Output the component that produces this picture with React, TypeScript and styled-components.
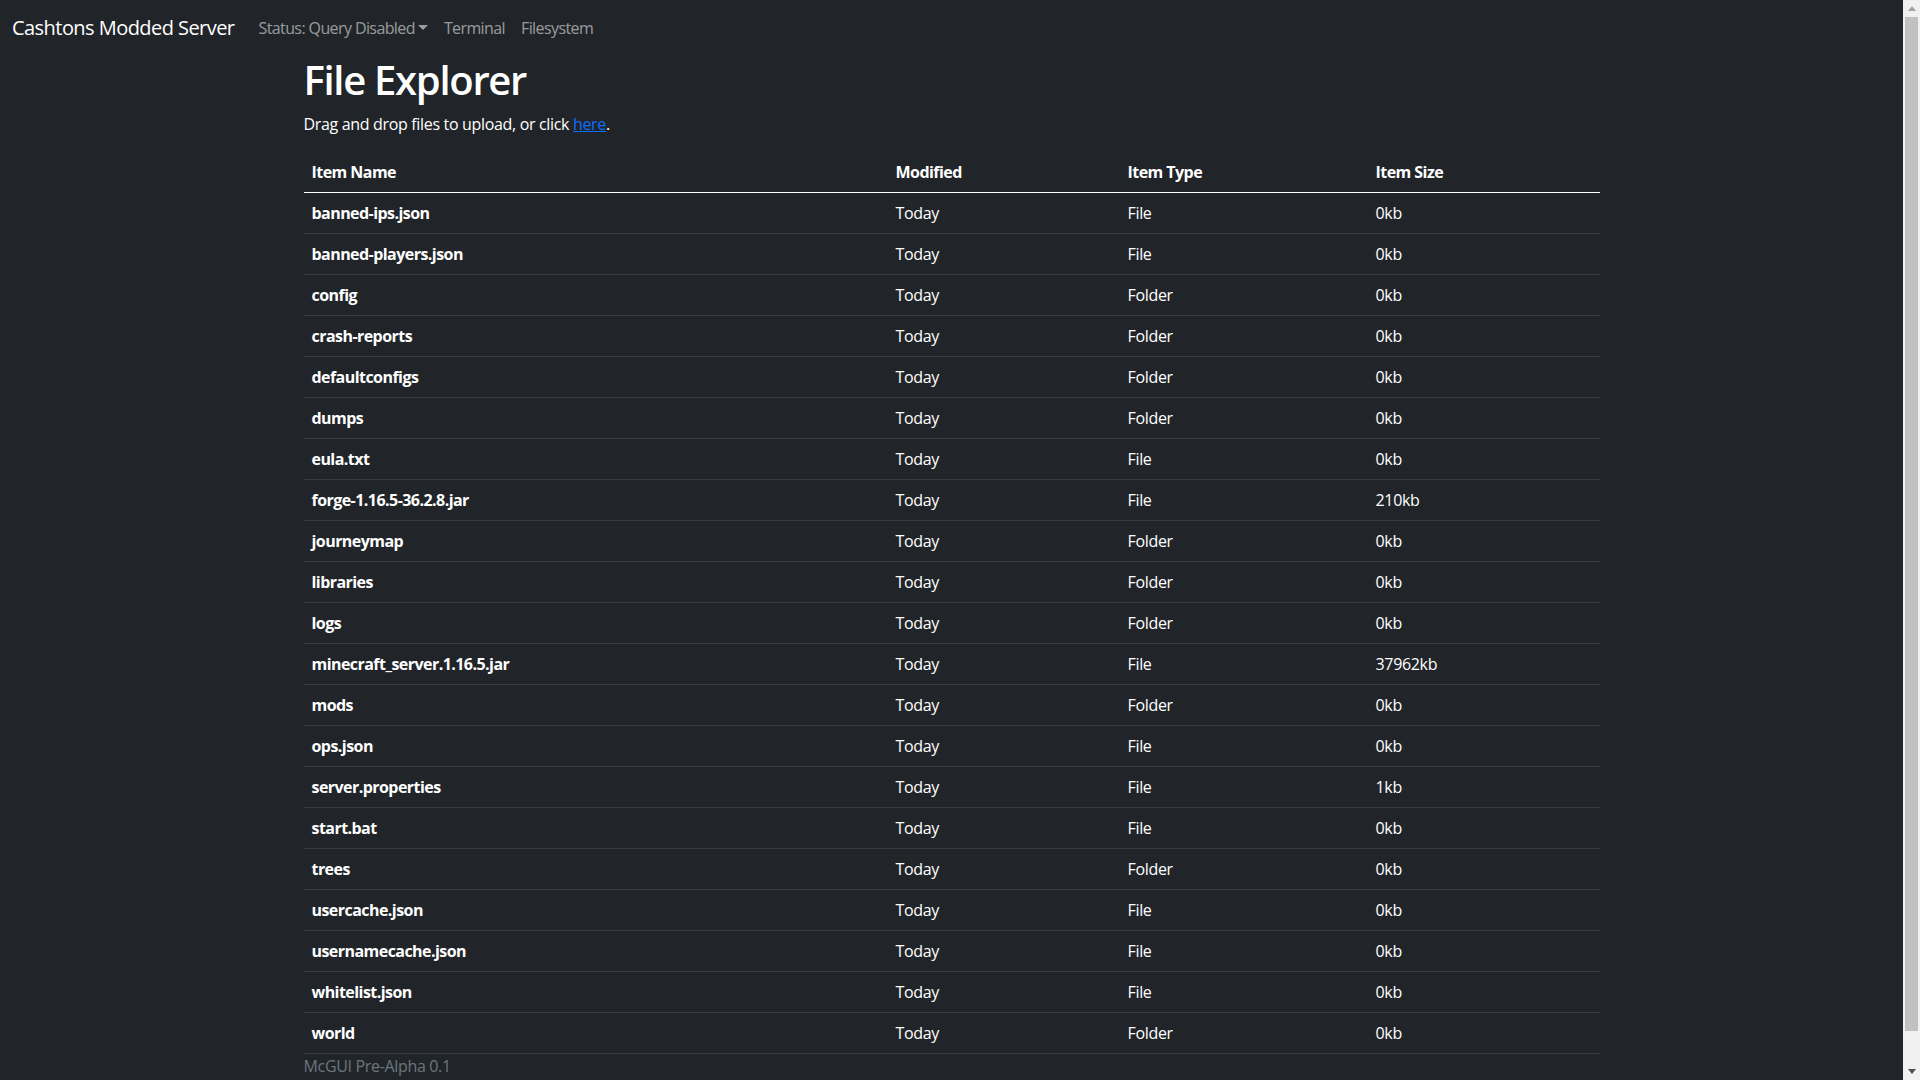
import React from "react";
import styled, { createGlobalStyle } from "styled-components";

const GlobalStyle = createGlobalStyle`
  html, body {
    margin: 0;
    padding: 0;
    background: #212529;
  }
  body {
    font-family: "Open Sans", "Noto Sans", sans-serif;
    font-size: 16px;
    line-height: 1.5;
    color: #fff;
    letter-spacing: -0.33px;
  }
  * { box-sizing: border-box; }
`;

const Page = styled.div`
  margin-right: 17px;
`;

const Scrollbar = styled.div`
  position: fixed;
  top: 0;
  right: 0;
  width: 17px;
  height: 100vh;
  background: #f1f1f1;
  display: flex;
  flex-direction: column;
  align-items: center;
`;

const ScrollButton = styled.div`
  height: 17px;
  width: 17px;
  display: flex;
  align-items: center;
  justify-content: center;
`;

const Thumb = styled.div`
  flex: 1;
  width: 13px;
  margin-bottom: 32px;
  background: #c1c1c1;
`;

const Navbar = styled.nav`
  display: flex;
  align-items: center;
  height: 56px;
  padding: 8px 12px;
  background: #212529;
`;

const Brand = styled.a`
  font-size: 20px;
  line-height: 30px;
  padding: 5px 0;
  margin-right: 16px;
  color: #fff;
  text-decoration: none;
  white-space: nowrap;
  letter-spacing: -0.55px;
`;

const NavList = styled.ul`
  display: flex;
  list-style: none;
  margin: 0;
  padding: 0;
`;

const NavLink = styled.a`
  display: block;
  padding: 8px;
  color: rgba(255, 255, 255, 0.55);
  text-decoration: none;
  font-size: 16px;
  line-height: 24px;
  white-space: nowrap;
  letter-spacing: -0.6px;
`;

const Caret = styled.span`
  display: inline-block;
  margin-left: 3px;
  vertical-align: 4px;
  border-top: 5px solid currentColor;
  border-left: 5px solid transparent;
  border-right: 5px solid transparent;
`;

const Container = styled.main`
  width: 1320px;
  max-width: 100%;
  margin: 0 auto;
  padding: 0 12px 36px;
`;

const Title = styled.h1`
  margin: 0 0 8px;
  font-size: 40px;
  font-weight: 600;
  line-height: 48px;
  color: #fff;
  letter-spacing: -1.3px;
`;

const Lead = styled.p`
  margin: 0 0 16px;
  color: #fff;
`;

const Link = styled.a`
  color: #0d6efd;
  text-decoration: underline;
`;

const Table = styled.table`
  width: 100%;
  border-collapse: collapse;
  table-layout: fixed;
  color: #fff;
`;

const Th = styled.th<{ $w: number }>`
  width: ${(p) => p.$w}px;
  text-align: left;
  font-weight: 700;
  padding: 8px;
  line-height: 24px;
  border-bottom: 1px solid #fff;
  letter-spacing: -0.55px;
`;

const Row = styled.tr`
  border-bottom: 1px solid #373b3e;
`;

const Td = styled.td<{ $bold?: boolean }>`
  padding: 8px;
  line-height: 24px;
  font-weight: ${(p) => (p.$bold ? 700 : 400)};
  letter-spacing: ${(p) => (p.$bold ? "-0.55px" : "-0.33px")};
`;

const Footer = styled.footer`
  color: #6c757d;
  line-height: 24px;
`;

const files: [string, string, string][] = [
  ["banned-ips.json", "File", "0kb"],
  ["banned-players.json", "File", "0kb"],
  ["config", "Folder", "0kb"],
  ["crash-reports", "Folder", "0kb"],
  ["defaultconfigs", "Folder", "0kb"],
  ["dumps", "Folder", "0kb"],
  ["eula.txt", "File", "0kb"],
  ["forge-1.16.5-36.2.8.jar", "File", "210kb"],
  ["journeymap", "Folder", "0kb"],
  ["libraries", "Folder", "0kb"],
  ["logs", "Folder", "0kb"],
  ["minecraft_server.1.16.5.jar", "File", "37962kb"],
  ["mods", "Folder", "0kb"],
  ["ops.json", "File", "0kb"],
  ["server.properties", "File", "1kb"],
  ["start.bat", "File", "0kb"],
  ["trees", "Folder", "0kb"],
  ["usercache.json", "File", "0kb"],
  ["usernamecache.json", "File", "0kb"],
  ["whitelist.json", "File", "0kb"],
  ["world", "Folder", "0kb"],
];

export default function App() {
  return (
    <>
      <GlobalStyle />
      <Page>
        <Navbar>
          <Brand href="#">Cashtons Modded Server</Brand>
          <NavList>
            <li>
              <NavLink href="#">
                Status: Query Disabled
                <Caret />
              </NavLink>
            </li>
            <li>
              <NavLink href="#">Terminal</NavLink>
            </li>
            <li>
              <NavLink href="#">Filesystem</NavLink>
            </li>
          </NavList>
        </Navbar>
        <Container>
          <Title>File Explorer</Title>
          <Lead>
            Drag and drop files to upload, or click <Link href="#">here</Link>.
          </Lead>
          <Table>
            <thead>
              <tr>
                <Th $w={584}>Item Name</Th>
                <Th $w={232}>Modified</Th>
                <Th $w={248}>Item Type</Th>
                <Th $w={232}>Item Size</Th>
              </tr>
            </thead>
            <tbody>
              {files.map(([name, type, size]) => (
                <Row key={name}>
                  <Td $bold>{name}</Td>
                  <Td>Today</Td>
                  <Td>{type}</Td>
                  <Td>{size}</Td>
                </Row>
              ))}
            </tbody>
          </Table>
          <Footer>McGUI Pre-Alpha 0.1</Footer>
        </Container>
      </Page>
      <Scrollbar>
        <ScrollButton>
          <svg width="8" height="5" viewBox="0 0 8 5">
            <polygon points="0,5 4,0 8,5" fill="#a3a3a3" />
          </svg>
        </ScrollButton>
        <Thumb />
        <ScrollButton>
          <svg width="8" height="5" viewBox="0 0 8 5">
            <polygon points="0,0 8,0 4,5" fill="#505050" />
          </svg>
        </ScrollButton>
      </Scrollbar>
    </>
  );
}
